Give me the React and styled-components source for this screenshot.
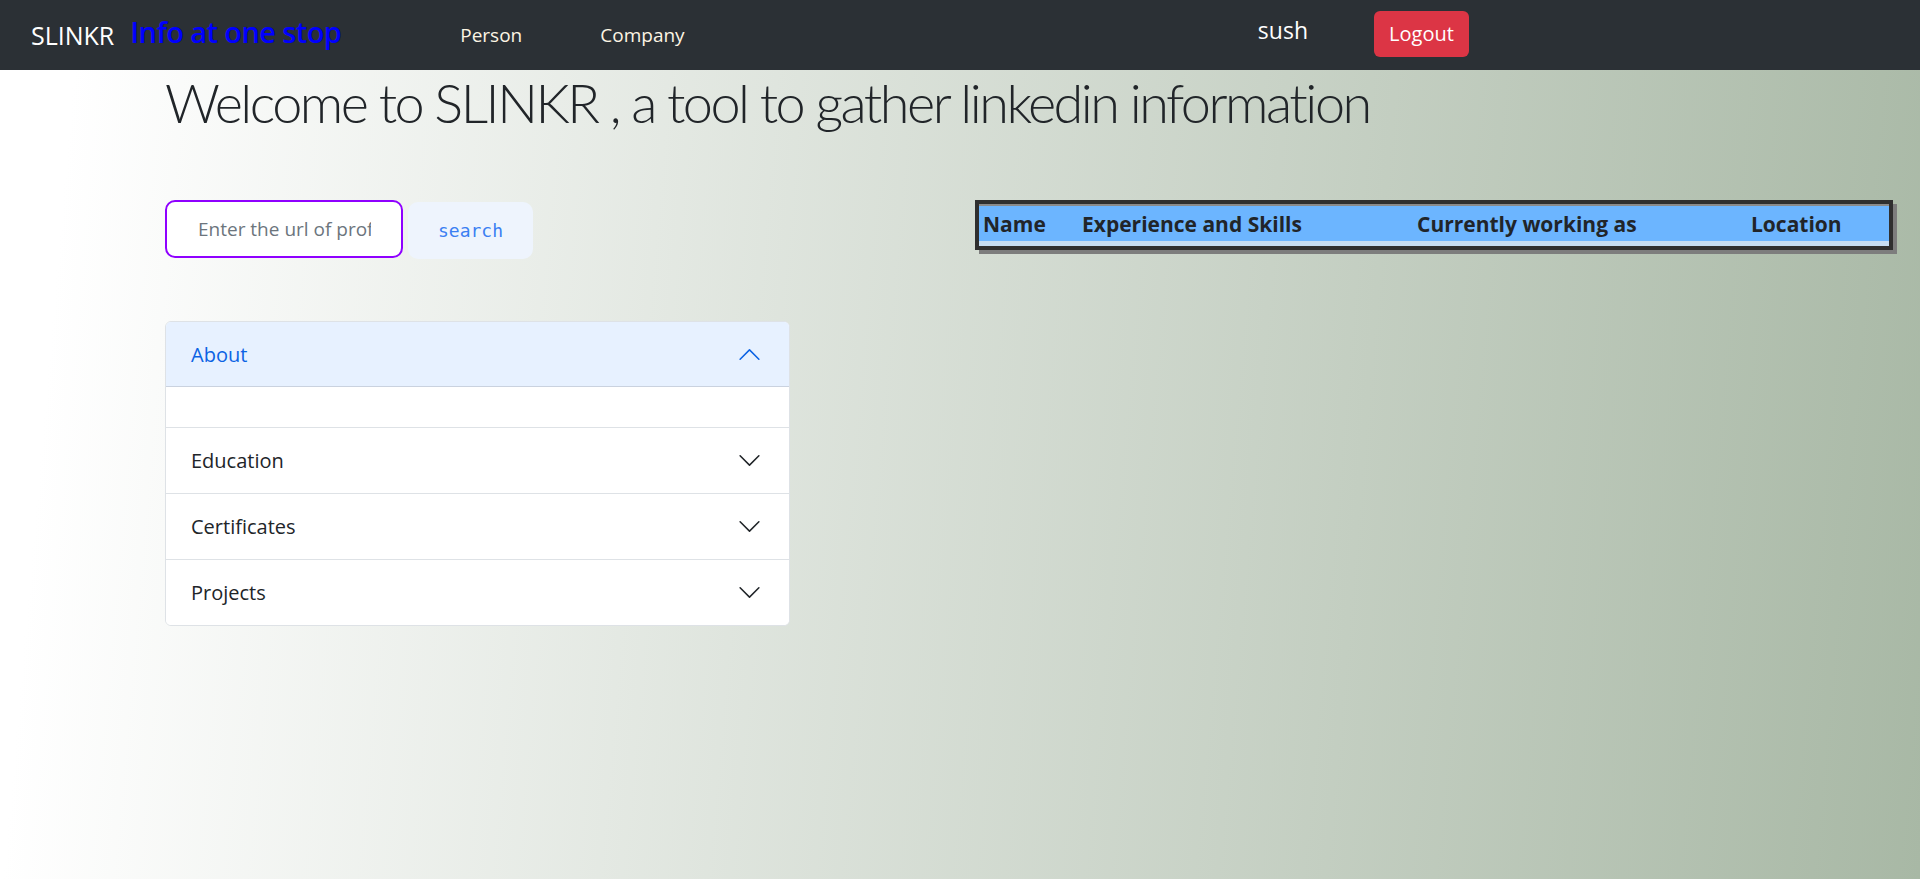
import React, { useState } from 'react'
import styled, { createGlobalStyle } from 'styled-components'

const GlobalStyle = createGlobalStyle`
    html, body {
        margin : 0;
        padding : 0;
    }
    body {
        font-family : "Open Sans", "Noto Sans", "Liberation Sans", sans-serif;
        color : #212529;
    }
    * {
        box-sizing : border-box;
    }
`

const Page = styled.div`
    min-height : 100vh;
    display : flex;
    flex-direction : column;
    background : linear-gradient(95deg, #ffffff 4%, #a8b8a5 100%);
`

const Navbar = styled.nav`
    height : 70px;
    flex-shrink : 0;
    background : #2b3035;
    display : flex;
    align-items : center;
    padding : 0 451px 0 31px;
`

const Brand = styled.a`
    font-size : 25px;
    color : #fff;
    text-decoration : none;
`

const Tagline = styled.span`
    margin-left : 16px;
    margin-top : -8px;
    font-size : 29px;
    font-weight : 600;
    color : #0000ff;
    letter-spacing : -0.6px;
`

const NavLinks = styled.div`
    display : flex;
    gap : 78px;
    margin-left : 119px;
`

const NavLink = styled.a`
    font-size : 19px;
    color : #fdf5e4;
    text-decoration : none;
    cursor : pointer;
`

const UserArea = styled.div`
    display : flex;
    align-items : center;
    gap : 66px;
    margin-left : auto;
`

const UserName = styled.span`
    font-size : 23px;
    color : #fff;
    margin-top : -10px;
`

const LogoutButton = styled.button`
    width : 95px;
    height : 46px;
    margin-top : -3px;
    border : 0;
    border-radius : 6px;
    background : #dc3545;
    color : #fff;
    font-family : inherit;
    font-size : 20px;
    cursor : pointer;
`

const Main = styled.main`
    padding : 0 24px 0 165px;
`

const Heading = styled.h1`
    margin : 0;
    font-family : Lato, "Open Sans", sans-serif;
    font-size : 54px;
    font-weight : 300;
    line-height : 66px;
    letter-spacing : -2.5px;
    color : #212529;
`

const ContentRow = styled.div`
    display : flex;
    align-items : flex-start;
    margin-top : 64px;
`

const LeftCol = styled.div`
    width : 625px;
    flex-shrink : 0;
`

const RightCol = styled.div`
    margin-left : 185px;
`

const SearchRow = styled.div`
    display : flex;
    align-items : flex-start;
    gap : 5px;
`

const UrlInput = styled.input`
    width : 238px;
    height : 58px;
    padding : 0 30px 0 31px;
    border : 2px solid #8f00ff;
    border-radius : 10px;
    background : #fff;
    font-family : inherit;
    font-size : 19px;
    outline : none;
    &::placeholder {
        color : #6c757d;
    }
`

const SearchButton = styled.button`
    width : 125px;
    height : 57px;
    margin-top : 2px;
    border : 0;
    border-radius : 10px;
    background : #eef4fd;
    color : #3b7ff2;
    font-family : "DejaVu Sans Mono", "Liberation Mono", monospace;
    font-size : 18px;
    cursor : pointer;
`

const Accordion = styled.div`
    margin-top : 62px;
    background : #fff;
    border : 1px solid #dee2e6;
    border-radius : 6px;
    overflow : hidden;
`

const Item = styled.div`
    & + & {
        border-top : 1px solid #dee2e6;
    }
`

const ItemHeader = styled.button`
    width : 100%;
    display : flex;
    align-items : center;
    justify-content : space-between;
    padding : 20px 27px 20px 25px;
    border : 0;
    background : ${p => p.open ? '#e7f1ff' : '#fff'};
    color : ${p => p.open ? '#0c63e4' : '#212529'};
    box-shadow : ${p => p.open ? 'inset 0 -1px 0 rgba(0, 0, 0, 0.125)' : 'none'};
    font-family : inherit;
    font-size : 20px;
    line-height : 25px;
    text-align : left;
    cursor : pointer;
    svg {
        transform : ${p => p.open ? 'rotate(-180deg)' : 'none'};
    }
`

const ItemBody = styled.div`
    min-height : 40px;
    padding : 20px 25px;
`

const Table = styled.table`
    width : 918px;
    border-collapse : separate;
    border-spacing : 0;
    border : 4px solid #2f2f2f;
    box-shadow : 4px 4px 0 #7d7d7d;
    background : #c6ddf3;
    padding-bottom : 5px;
`

const Th = styled.th`
    width : ${p => p.w}px;
    padding : 5px 0 4px 4px;
    border-top : 2px solid #8a8a8a;
    background : #6cb5ff;
    color : #212529;
    font-size : 21px;
    font-weight : 700;
    line-height : 26px;
    text-align : left;
`

const Chevron = () => (
    <svg width="25" height="25" viewBox="0 0 16 16" fill="currentColor">
        <path fillRule="evenodd" d="M1.646 4.646a.5.5 0 0 1 .708 0L8 10.293l5.646-5.647a.5.5 0 0 1 .708.708l-6 6a.5.5 0 0 1-.708 0l-6-6a.5.5 0 0 1 0-.708z" />
    </svg>
)

const sections = ['About', 'Education', 'Certificates', 'Projects']

const columns = [
    { label : 'Name', w : 99 },
    { label : 'Experience and Skills', w : 335 },
    { label : 'Currently working as', w : 334 },
    { label : 'Location', w : 142 },
]

const App = () => {
    const [open, setOpen] = useState('About')
    const [url, setUrl] = useState('')

    return (
        <>
        <GlobalStyle />
        <Page>
            <Navbar>
                <Brand>SLINKR</Brand>
                <Tagline>Info at one stop</Tagline>
                <NavLinks>
                    <NavLink>Person</NavLink>
                    <NavLink>Company</NavLink>
                </NavLinks>
                <UserArea>
                    <UserName>sush</UserName>
                    <LogoutButton>Logout</LogoutButton>
                </UserArea>
            </Navbar>
            <Main>
                <Heading>Welcome to SLINKR , a tool to gather linkedin information</Heading>
                <ContentRow>
                    <LeftCol>
                        <SearchRow>
                            <UrlInput
                                value={url}
                                onChange={e => setUrl(e.target.value)}
                                placeholder="Enter the url of profile"
                            />
                            <SearchButton>search</SearchButton>
                        </SearchRow>
                        <Accordion>
                            {sections.map(s => (
                                <Item key={s}>
                                    <ItemHeader open={open === s} onClick={() => setOpen(open === s ? null : s)}>
                                        {s}
                                        <Chevron />
                                    </ItemHeader>
                                    {open === s && <ItemBody />}
                                </Item>
                            ))}
                        </Accordion>
                    </LeftCol>
                    <RightCol>
                        <Table>
                            <thead>
                                <tr>
                                    {columns.map(c => <Th key={c.label} w={c.w}>{c.label}</Th>)}
                                </tr>
                            </thead>
                        </Table>
                    </RightCol>
                </ContentRow>
            </Main>
        </Page>
        </>
    )
}

export default App
